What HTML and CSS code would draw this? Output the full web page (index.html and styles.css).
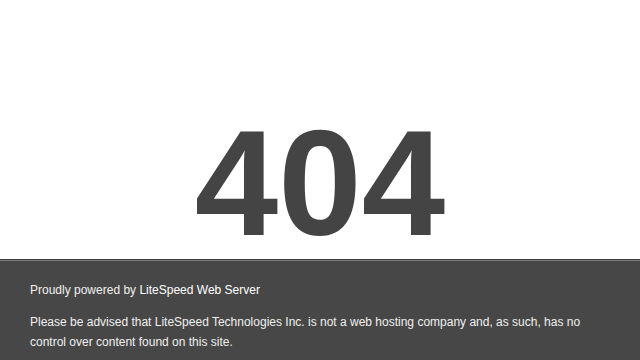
FILE: index.html
```html
<!DOCTYPE html>
<html>
<head>
<meta charset="utf-8">
<title>404 Not Found</title>
<link rel="stylesheet" href="styles.css">
</head>
<body>
<div class="main">
  <h1 class="code">404</h1>
</div>
<div class="footer">
  <div class="powered">Proudly powered by <a class="link" href="#">LiteSpeed Web Server</a></div>
  <p class="notice">Please be advised that LiteSpeed Technologies Inc. is not a web hosting company and, as such, has no control over content found on this site.</p>
</div>
</body>
</html>
```

FILE: styles.css
```css
html, body {
  height: 100%;
}
body {
  margin: 0;
  color: #444;
  background: #fff;
  font: normal 14px/20px "Liberation Sans", Arial, Helvetica, sans-serif;
  display: flex;
  flex-direction: column;
}
.main {
  flex: 1;
  min-height: 0;
  padding-top: 30vh;
  text-align: center;
}
.code {
  margin: 0;
  font-size: 150px;
  line-height: 150px;
  font-weight: bold;
}
.footer {
  flex: none;
  height: 100px;
  padding: 0 30px;
  color: #f0f0f0;
  font-size: 12px;
  background-color: #474747;
  border-top: 1px solid rgba(0,0,0,0.15);
  box-shadow: 0 1px 0 rgba(255,255,255,0.3) inset;
}
.powered {
  padding-top: 20px;
}
.link {
  color: #fff;
  text-decoration: none;
}
.notice {
  margin: 12px 0 0;
}
```
